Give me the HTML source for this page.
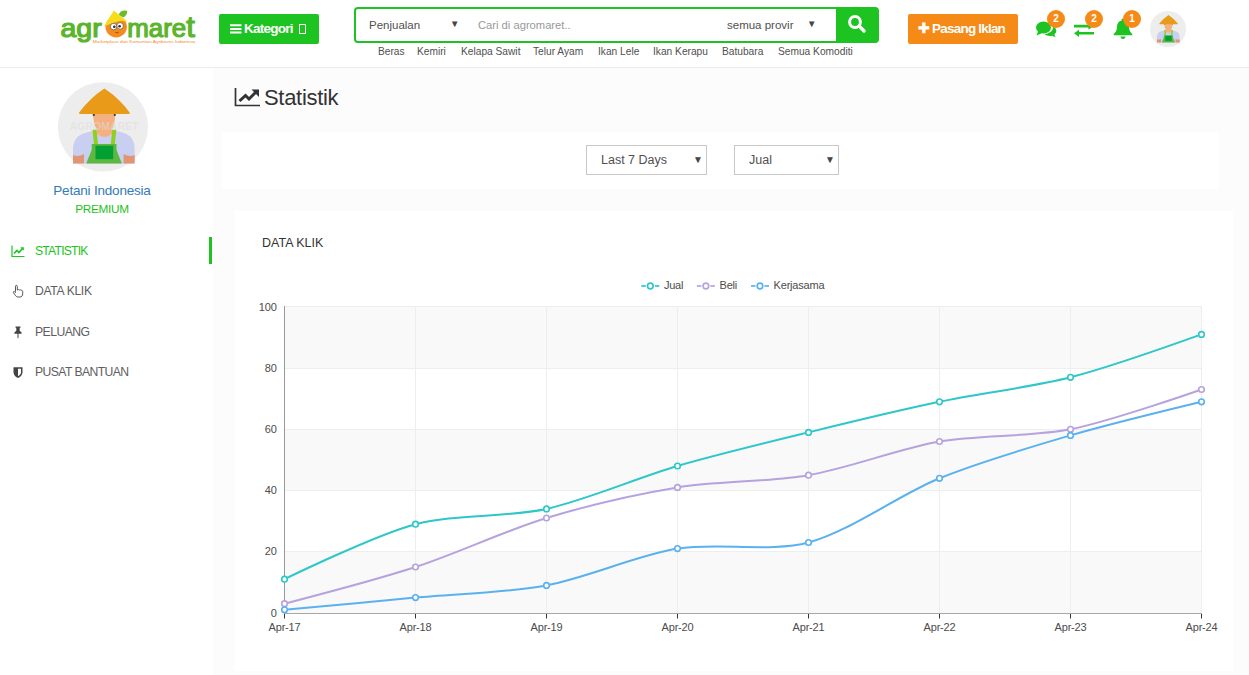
<!DOCTYPE html>
<html lang="id"><head><meta charset="utf-8"><title>Statistik - agromaret</title>
<style>
*{box-sizing:border-box;margin:0;padding:0}
html,body{width:1249px;height:675px;overflow:hidden;background:#fcfcfc;font-family:"Liberation Sans",Arial,sans-serif;color:#333}
.abs{position:absolute}
#header{position:absolute;left:0;top:0;width:1249px;height:68px;background:#fff;border-bottom:1px solid #ececec}
#sidebar{position:absolute;left:0;top:68px;width:213px;height:607px;background:#fff}
.btn-kat{left:219px;top:14px;width:100px;height:30px;background:#1cc321;border-radius:2px;color:#fff;font-weight:bold;font-size:13.5px;line-height:29px;letter-spacing:-0.75px}
.search{left:354px;top:7px;width:525px;height:36px;border:2px solid #1cc321;border-radius:4px;background:#fff}
.search .btn{position:absolute;right:-1px;top:-1px;width:42px;height:33px;background:#1cc321;border-radius:0 2px 2px 0}
.s-txt{position:absolute;top:1px;line-height:31px;font-size:11.5px;color:#505050;white-space:nowrap}
.links{left:378px;top:46px;font-size:10.2px;color:#505050;white-space:nowrap;line-height:12px}
.links span{position:absolute;top:0}
.btn-pasang{left:908px;top:14px;width:110px;height:30px;background:#f68a16;border-radius:2px;color:#fff;font-weight:bold;font-size:13.5px;line-height:29.5px;text-align:center;letter-spacing:-0.8px;padding-right:3px}
.badge{width:18px;height:18px;border-radius:9px;background:#f68a16;color:#fff;font-size:10px;font-weight:bold;text-align:center;line-height:17px}
.menu{position:absolute;left:0;width:213px;height:28px;font-size:12.2px;line-height:28px;color:#5e5e5e;letter-spacing:-0.5px}
.menu span{position:absolute;left:35px;top:0;white-space:nowrap}
.menu svg{position:absolute;left:11px;top:7px}
.menu.act{color:#1cc321}
.menu.act i{position:absolute;left:209px;top:0;width:3px;height:27px;background:#1cc321}
h1{position:absolute;left:264px;top:84px;font-size:22px;font-weight:normal;color:#333;line-height:28px;letter-spacing:-0.3px}
.filter{left:222px;top:132px;width:997px;height:57px;background:#fff}
.sel{position:absolute;height:30px;border:1px solid #c8c8c8;background:#fff;font-size:12.5px;line-height:28px;color:#505050;padding-left:14px}
.sel b{position:absolute;right:3px;top:0;font-size:10px;font-weight:normal;color:#444}
.card{left:235px;top:211px;width:998px;height:460px;background:#fff}
.chart{position:absolute;left:0;top:0}
</style></head><body>
<div id="header">
  <!-- logo -->
  <svg class="abs" style="left:55px;top:5px" width="150" height="48" viewBox="55 5 150 48">
    <g font-family="Liberation Sans, Arial, sans-serif" font-size="25" fill="#5bb52c" stroke="#5bb52c" stroke-width="1.2" stroke-linejoin="round">
    <text x="60.5" y="36.5" textLength="41.2" lengthAdjust="spacingAndGlyphs">agr</text>
    <text x="127.2" y="36.5" textLength="67.6" lengthAdjust="spacingAndGlyphs">mare<tspan font-size="30">t</tspan></text>
    </g>
    <path d="M118.6 15 Q120.500 9.500 127.200 10.800 Q127.500 15 123.500 17.500 Z" fill="#6cbb2d"/>
    <circle cx="116.2" cy="26.8" r="10.7" fill="#f58a1f"/>
    <path d="M103.800 26.600 L113.800 10.400 L127.600 21.800 Q121 20 115 22.200 Q109 24.200 103.800 26.600 Z" fill="#f7dc1c"/>
    <circle cx="113.600" cy="26.600" r="3.300" fill="#fff" stroke="#5a4a3a" stroke-width="0.7"/><circle cx="120.100" cy="25.900" r="3.300" fill="#fff" stroke="#5a4a3a" stroke-width="0.7"/>
    <circle cx="114.300" cy="26.800" r="1.300" fill="#2b2b2b"/><circle cx="119.600" cy="26.200" r="1.300" fill="#2b2b2b"/>
    <path d="M115.300 32.300 Q117 33.600 118.800 32" fill="none" stroke="#8a3d00" stroke-width="0.8"/>
    <text x="92.800" y="42.800" font-family="Liberation Sans, Arial, sans-serif" font-size="4.300" fill="#f58a1f" textLength="102.700" lengthAdjust="spacingAndGlyphs">Marketplace dan Komunitas Agribisnis Indonesia</text>
  </svg>
  <div class="abs btn-kat"><svg class="abs" style="left:11px;top:9px" width="12" height="12" viewBox="0 0 12 12"><path d="M0 1.2h11.5v2H0zM0 4.9h11.5v2H0zM0 8.6h11.5v2H0z" fill="#fff"/></svg><span class="abs" style="left:25px;top:0">Kategori</span><span class="abs" style="left:79.5px;top:10px;width:7.5px;height:10px;border:1px solid #fff"></span></div>
  <div class="abs search">
    <span class="s-txt" style="left:13px">Penjualan</span><span class="s-txt" style="left:94px;top:-1.5px;font-size:9.5px;color:#444">&#9660;</span>
    <span class="s-txt" style="left:122px;color:#999;font-size:11.2px">Cari di agromaret..</span>
    <span class="s-txt" style="left:371px">semua provir</span><span class="s-txt" style="left:451px;top:-1.5px;font-size:9.5px;color:#444">&#9660;</span>
    <div class="btn"><svg class="abs" style="left:11px;top:6px" width="20" height="20" viewBox="0 0 20 20"><circle cx="8" cy="8" r="5.4" fill="none" stroke="#fff" stroke-width="3"/><path d="M12.4 12.4L17 17" stroke="#fff" stroke-width="3.4" stroke-linecap="round"/></svg></div>
  </div>
  <div class="abs links">
    <span style="left:0">Beras</span><span style="left:39px">Kemiri</span><span style="left:83px">Kelapa Sawit</span><span style="left:155px">Telur Ayam</span><span style="left:220px">Ikan Lele</span><span style="left:275px">Ikan Kerapu</span><span style="left:344px">Batubara</span><span style="left:400px">Semua Komoditi</span>
  </div>
  <div class="abs btn-pasang"><span style="font-size:13.5px;position:relative;top:0px">&#10010;</span> Pasang Iklan</div>
  <!-- icons -->
  <svg class="abs" style="left:1034px;top:18px" width="24" height="22" viewBox="0 0 24 22"><ellipse cx="9.5" cy="9.5" rx="7.5" ry="6" fill="#1cc321"/><path d="M4.5 12 L2.5 17.5 L9 14.8Z" fill="#1cc321"/><path d="M19 8.2c2 1 3.3 2.7 3.3 4.6 0 1.4-.7 2.7-1.9 3.6l1.2 2.9-3.6-1.6c-.7.2-1.5.3-2.300.3-2.200 0-4.100-.8-5.300-2 4.500-.200 8.700-3 8.700-7 0-.3 0-.5-.1-.8z" fill="#1cc321"/></svg>
  <div class="abs badge" style="left:1047px;top:10px">2</div>
  <svg class="abs" style="left:1073px;top:19px" width="22" height="20" viewBox="0 0 22 20"><path d="M1 5.800h14.500V3.500L20.500 7.100 15.500 10.700V8.400H1z" fill="#1cc321"/><path d="M21 13H6v-2.300L1 14.300 6 17.900V15.600h15z" fill="#1cc321"/></svg>
  <div class="abs badge" style="left:1085px;top:10px">2</div>
  <svg class="abs" style="left:1111.5px;top:17px" width="22" height="23" viewBox="0 0 22 23"><path d="M11 1.500c.8 0 1.400.6 1.400 1.400v.5c3 .7 4.600 3.200 4.600 6.200 0 3.600 1 5.600 3.300 7.300v1.300H1.700v-1.300C4 15.200 5 13.200 5 9.600c0-3 1.600-5.500 4.600-6.200v-.5c0-.8.600-1.400 1.400-1.400z" fill="#1cc321"/><path d="M8.500 19.500h5c0 1.400-1.100 2.500-2.500 2.500s-2.500-1.100-2.500-2.500z" fill="#1cc321"/></svg>
  <div class="abs badge" style="left:1123px;top:10px">1</div>
  <svg class="abs" style="left:1150px;top:11px" width="36" height="36" viewBox="0 0 90 90"><circle cx="45" cy="45" r="45" fill="#ededed"/><g transform="translate(3.6 5.5) scale(0.92)">
      <path d="M15 79.600 L15 66 Q15 52 27 49 L36 46.500 Q46 58 57 46.500 L66 49 Q76.600 52 76.600 66 L76.600 79.600 Z" fill="#c8cff0"/>
      <path d="M15 79.600 L15 71 Q20 73.500 26 70 L26 79.600Z M76.600 79.600 L76.600 71 Q71.600 73.500 65.600 70 L65.600 79.600Z" fill="#e29572"/>
      <path d="M35 29 L57.300 29 Q57 40 54.200 45 L54.200 49.500 Q46.400 56.500 38.600 49.500 L38.600 45 Q35.300 40 35 29Z" fill="#f5b07f"/>
      <circle cx="35.800" cy="31" r="1.100" fill="#3a2a20"/><circle cx="56.800" cy="31" r="1.100" fill="#3a2a20"/>
      <path d="M34.500 45.800 L38.600 45.800 L40 60.500 L36 60.500Z M54.200 45.800 L58.300 45.800 L56.800 60.500 L52.800 60.500 Z" fill="#8fd01f"/>
      <path d="M33.700 60 L58.500 60 L58.500 66 L63.900 79.600 L28.200 79.600 L33.700 66 Z" fill="#5cb83f"/>
      <rect x="37.500" y="61.700" width="17.700" height="13.500" fill="#02a033"/>
      <path d="M46.400 4.600 Q61 14 71.800 28.800 Q72 30 70.500 30 L22.300 30 Q20.800 30 21 28.800 Q32 14 46.400 4.600Z" fill="#e89a18"/>
    </g></svg>
</div>
<div id="sidebar">
  <svg class="abs" style="left:57.5px;top:14px" width="90" height="90" viewBox="0 -2 90 90">
    
    <ellipse cx="45" cy="42.900" rx="45" ry="44.700" fill="#ededed"/>
    <g>
      <path d="M15 79.600 L15 66 Q15 52 27 49 L36 46.500 Q46 58 57 46.500 L66 49 Q76.600 52 76.600 66 L76.600 79.600 Z" fill="#c8cff0"/>
      <path d="M15 79.600 L15 71 Q20 73.500 26 70 L26 79.600Z M76.600 79.600 L76.600 71 Q71.600 73.500 65.600 70 L65.600 79.600Z" fill="#e29572"/>
      <path d="M35 29 L57.300 29 Q57 40 54.200 45 L54.200 49.500 Q46.400 56.500 38.600 49.500 L38.600 45 Q35.300 40 35 29Z" fill="#f5b07f"/>
      <circle cx="35.800" cy="31" r="1.100" fill="#3a2a20"/><circle cx="56.800" cy="31" r="1.100" fill="#3a2a20"/>
      <path d="M34.500 45.800 L38.600 45.800 L40 60.500 L36 60.500Z M54.200 45.800 L58.300 45.800 L56.800 60.500 L52.800 60.500 Z" fill="#8fd01f"/>
      <path d="M33.700 60 L58.500 60 L58.500 66 L63.900 79.600 L28.200 79.600 L33.700 66 Z" fill="#5cb83f"/>
      <rect x="37.500" y="61.700" width="17.700" height="13.500" fill="#02a033"/>
      <path d="M46.400 4.600 Q61 14 71.800 28.800 Q72 30 70.500 30 L22.300 30 Q20.800 30 21 28.800 Q32 14 46.400 4.600Z" fill="#e89a18"/>
    </g>
    <text x="11.700" y="46.300" textLength="69" lengthAdjust="spacingAndGlyphs" font-family="Liberation Sans, Arial, sans-serif" font-weight="bold" font-size="10.200" fill="#dcdcdc" fill-opacity="0.55">AGROMARET</text>
  </svg>
  <div class="abs" style="left:0;top:115px;width:204px;text-align:center;font-size:13.5px;color:#337ab7;line-height:16px;letter-spacing:-0.2px">Petani Indonesia</div>
  <div class="abs" style="left:0;top:133px;width:204px;text-align:center;font-size:11.8px;color:#1cc321;line-height:16px;letter-spacing:-0.3px">PREMIUM</div>
  <div class="menu act" style="top:169px"><svg width="14" height="14" viewBox="0 0 14 14"><path d="M1 1.500V12.500H13.500" fill="none" stroke="#1cc321" stroke-width="1.200"/><path d="M3 9.500L6 6.500 8 8.500 11.500 4.500" fill="none" stroke="#1cc321" stroke-width="1.700"/><path d="M9.300 3.200H12.800V6.700Z" fill="#1cc321"/></svg><span style="letter-spacing:-0.8px">STATISTIK</span><i></i></div>
  <div class="menu" style="top:209px"><svg width="14" height="14" viewBox="0 0 14 14"><path d="M4.500 7.500V2.300c0-.6.400-1 .9-1s.9.400.9 1V6h.6c.4-.5 1.200-.5 1.600 0 .5-.4 1.300-.3 1.600.3.800-.2 1.600.3 1.600 1.200v2.300c0 1.700-1 3.200-2.600 3.200H6.800c-1 0-1.700-.5-2.200-1.300L2.400 8.600c-.4-.6.300-1.400 1-1l1.100.9z" fill="none" stroke="#444" stroke-width="0.900"/></svg><span style="letter-spacing:-0.35px">DATA KLIK</span></div>
  <div class="menu" style="top:250px"><svg width="14" height="14" viewBox="0 0 14 14"><path d="M4.500 1.500h5v1.200h-.8v3.300c1.300.5 2 1.500 2 2.700H7.500V12.500L7 13.500 6.500 12.500V8.700H3.300c0-1.200.7-2.200 2-2.700V2.700h-.8z" fill="#444"/></svg><span style="letter-spacing:-0.54px">PELUANG</span></div>
  <div class="menu" style="top:290px"><svg width="14" height="14" viewBox="0 0 14 14"><path d="M2.500 2.200h9v5c0 3-2.500 4.800-4.500 5.800-2-1-4.500-2.800-4.500-5.800z" fill="#444"/><path d="M7 3.700h3v3.500c0 1.800-1.400 3.100-3 4z" fill="#fff"/></svg><span style="letter-spacing:-0.58px">PUSAT BANTUAN</span></div>
</div>
<svg class="abs" style="left:234px;top:86px" width="28" height="22" viewBox="0 0 28 22"><path d="M1.500 2V19.500H26" fill="none" stroke="#333" stroke-width="1.700"/><path d="M5.500 15L11.500 9.500 15 13 22 6" fill="none" stroke="#333" stroke-width="3"/><path d="M17.500 3.500H25V11Z" fill="#333"/></svg>
<h1>Statistik</h1>
<div class="abs filter">
  <div class="sel" style="left:364px;top:13px;width:121px">Last 7 Days<b>&#9660;</b></div>
  <div class="sel" style="left:512px;top:13px;width:105px">Jual<b>&#9660;</b></div>
</div>
<div class="abs card"></div>
<div class="abs" style="left:262px;top:235px;font-size:12.5px;color:#333;line-height:16px">DATA KLIK</div>
<svg class="chart" width="1249" height="675" viewBox="0 0 1249 675" font-family="Liberation Sans, Arial, sans-serif" font-size="11" letter-spacing="-0.2" fill="#4c4c4c"><rect x="284.5" y="552.0" width="917.0" height="61.0" fill="#f9f9f9"/>
<rect x="284.5" y="491.0" width="917.0" height="61.0" fill="#ffffff"/>
<rect x="284.5" y="430.0" width="917.0" height="61.0" fill="#f9f9f9"/>
<rect x="284.5" y="369.0" width="917.0" height="61.0" fill="#ffffff"/>
<rect x="284.5" y="306.0" width="917.0" height="63.0" fill="#f9f9f9"/>
<line x1="284.5" y1="551.5" x2="1201.5" y2="551.5" stroke="#eeeeee"/>
<line x1="284.5" y1="490.5" x2="1201.5" y2="490.5" stroke="#eeeeee"/>
<line x1="284.5" y1="429.5" x2="1201.5" y2="429.5" stroke="#eeeeee"/>
<line x1="284.5" y1="368.5" x2="1201.5" y2="368.5" stroke="#eeeeee"/>
<line x1="284.5" y1="306.5" x2="1201.5" y2="306.5" stroke="#eeeeee"/>
<line x1="415.5" y1="306.0" x2="415.5" y2="613.0" stroke="#eeeeee"/>
<line x1="546.5" y1="306.0" x2="546.5" y2="613.0" stroke="#eeeeee"/>
<line x1="677.5" y1="306.0" x2="677.5" y2="613.0" stroke="#eeeeee"/>
<line x1="808.5" y1="306.0" x2="808.5" y2="613.0" stroke="#eeeeee"/>
<line x1="939.5" y1="306.0" x2="939.5" y2="613.0" stroke="#eeeeee"/>
<line x1="1070.5" y1="306.0" x2="1070.5" y2="613.0" stroke="#eeeeee"/>
<line x1="1201.5" y1="306.0" x2="1201.5" y2="613.0" stroke="#eeeeee"/>
<line x1="284.5" y1="306.0" x2="284.5" y2="614.0" stroke="#999"/>
<line x1="284.0" y1="613.5" x2="1202.0" y2="613.5" stroke="#a8a8a8"/>
<line x1="284.5" y1="614.0" x2="284.5" y2="618.5" stroke="#333"/>
<text x="284.5" y="630.6" text-anchor="middle">Apr-17</text>
<line x1="415.5" y1="614.0" x2="415.5" y2="618.5" stroke="#333"/>
<text x="415.5" y="630.6" text-anchor="middle">Apr-18</text>
<line x1="546.5" y1="614.0" x2="546.5" y2="618.5" stroke="#333"/>
<text x="546.5" y="630.6" text-anchor="middle">Apr-19</text>
<line x1="677.5" y1="614.0" x2="677.5" y2="618.5" stroke="#333"/>
<text x="677.5" y="630.6" text-anchor="middle">Apr-20</text>
<line x1="808.5" y1="614.0" x2="808.5" y2="618.5" stroke="#333"/>
<text x="808.5" y="630.6" text-anchor="middle">Apr-21</text>
<line x1="939.5" y1="614.0" x2="939.5" y2="618.5" stroke="#333"/>
<text x="939.5" y="630.6" text-anchor="middle">Apr-22</text>
<line x1="1070.5" y1="614.0" x2="1070.5" y2="618.5" stroke="#333"/>
<text x="1070.5" y="630.6" text-anchor="middle">Apr-23</text>
<line x1="1201.5" y1="614.0" x2="1201.5" y2="618.5" stroke="#333"/>
<text x="1201.5" y="630.6" text-anchor="middle">Apr-24</text>
<text x="276.6" y="617.4" text-anchor="end">0</text>
<text x="276.6" y="555.4" text-anchor="end">20</text>
<text x="276.6" y="494.4" text-anchor="end">40</text>
<text x="276.6" y="433.4" text-anchor="end">60</text>
<text x="276.6" y="372.4" text-anchor="end">80</text>
<text x="276.6" y="311.4" text-anchor="end">100</text>
<path d="M284.5 579.2 C284.5 579.2 374.7 535.1 415.5 524.2 C453.3 514.0 508.1 517.4 546.5 508.9 C586.7 499.9 637.8 477.6 677.5 466.0 C716.4 454.7 769.1 442.0 808.5 432.4 C847.7 422.7 900.0 410.1 939.5 401.8 C978.6 393.5 1031.9 387.2 1070.5 377.3 C1110.5 367.0 1201.5 334.4 1201.5 334.4" fill="none" stroke="#2ec7c9" stroke-width="2"/>
<path d="M284.5 603.7 C284.5 603.7 376.7 579.7 415.5 567.0 C455.3 554.0 506.4 530.2 546.5 518.0 C585.0 506.3 637.8 493.9 677.5 487.4 C716.4 481.1 769.7 482.0 808.5 475.2 C848.3 468.2 899.7 448.5 939.5 441.5 C978.3 434.8 1032.0 436.9 1070.5 429.3 C1110.6 421.3 1201.5 389.5 1201.5 389.5" fill="none" stroke="#b6a2de" stroke-width="2"/>
<path d="M284.5 609.8 C284.5 609.8 376.2 601.3 415.5 597.6 C454.8 593.9 507.9 592.6 546.5 585.4 C586.5 577.9 637.5 555.2 677.5 548.6 C716.1 542.3 771.3 552.5 808.5 542.5 C849.9 531.4 899.1 494.8 939.5 478.3 C977.7 462.7 1030.8 447.0 1070.5 435.4 C1109.4 424.1 1201.5 401.8 1201.5 401.8" fill="none" stroke="#5ab1ef" stroke-width="2"/>
<g fill="#fff" stroke="#2ec7c9" stroke-width="1.6"><circle cx="284.5" cy="579.2" r="2.8"/><circle cx="415.5" cy="524.2" r="2.8"/><circle cx="546.5" cy="508.9" r="2.8"/><circle cx="677.5" cy="466.0" r="2.8"/><circle cx="808.5" cy="432.4" r="2.8"/><circle cx="939.5" cy="401.8" r="2.8"/><circle cx="1070.5" cy="377.3" r="2.8"/><circle cx="1201.5" cy="334.4" r="2.8"/></g>
<g fill="#fff" stroke="#b6a2de" stroke-width="1.6"><circle cx="284.5" cy="603.7" r="2.8"/><circle cx="415.5" cy="567.0" r="2.8"/><circle cx="546.5" cy="518.0" r="2.8"/><circle cx="677.5" cy="487.4" r="2.8"/><circle cx="808.5" cy="475.2" r="2.8"/><circle cx="939.5" cy="441.5" r="2.8"/><circle cx="1070.5" cy="429.3" r="2.8"/><circle cx="1201.5" cy="389.5" r="2.8"/></g>
<g fill="#fff" stroke="#5ab1ef" stroke-width="1.6"><circle cx="284.5" cy="609.8" r="2.8"/><circle cx="415.5" cy="597.6" r="2.8"/><circle cx="546.5" cy="585.4" r="2.8"/><circle cx="677.5" cy="548.6" r="2.8"/><circle cx="808.5" cy="542.5" r="2.8"/><circle cx="939.5" cy="478.3" r="2.8"/><circle cx="1070.5" cy="435.4" r="2.8"/><circle cx="1201.5" cy="401.8" r="2.8"/></g>
<line x1="641.3" y1="286.0" x2="645.8" y2="286.0" stroke="#2ec7c9" stroke-width="1.7"/><line x1="654.8" y1="286.0" x2="659.3" y2="286.0" stroke="#2ec7c9" stroke-width="1.7"/><circle cx="650.3" cy="286.0" r="2.8" fill="#fff" stroke="#2ec7c9" stroke-width="1.7"/><text x="663.9" y="289.4">Jual</text>
<line x1="696.9" y1="286.0" x2="701.4" y2="286.0" stroke="#b6a2de" stroke-width="1.7"/><line x1="710.4" y1="286.0" x2="714.9" y2="286.0" stroke="#b6a2de" stroke-width="1.7"/><circle cx="705.9" cy="286.0" r="2.8" fill="#fff" stroke="#b6a2de" stroke-width="1.7"/><text x="719.5" y="289.4">Beli</text>
<line x1="751.0" y1="286.0" x2="755.5" y2="286.0" stroke="#5ab1ef" stroke-width="1.7"/><line x1="764.5" y1="286.0" x2="769.0" y2="286.0" stroke="#5ab1ef" stroke-width="1.7"/><circle cx="760.0" cy="286.0" r="2.8" fill="#fff" stroke="#5ab1ef" stroke-width="1.7"/><text x="773.6" y="289.4">Kerjasama</text></svg>
</body></html>
